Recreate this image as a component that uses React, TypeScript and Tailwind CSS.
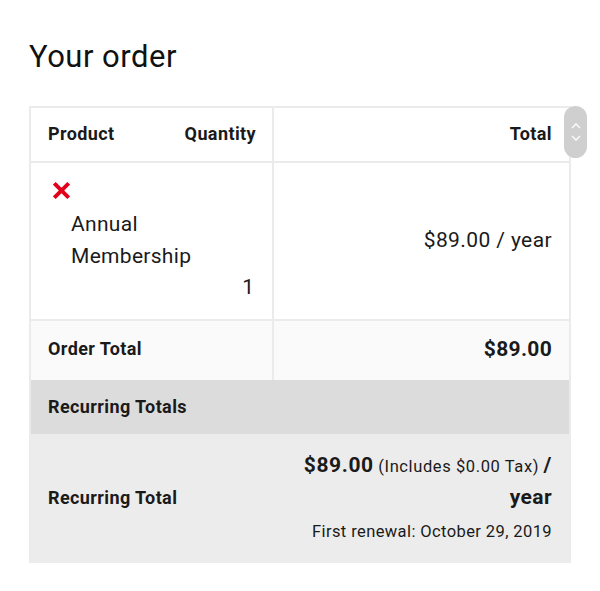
import React from "react";

export default function App() {
  return (
    <div
      className="min-h-[591px] w-[600px] bg-white text-[#1a1a1a]"
      style={{ fontFamily: "Roboto, 'Liberation Sans', sans-serif" }}
    >
      <div className="relative pl-[29px] pr-[29px] pt-[38px]">
        <h1 className="text-[31px] leading-[38px] font-normal tracking-[0.5px] text-[#111]">Your order</h1>

        <div className="mt-[30px] border-2 border-[#ebebeb] border-b-0">
          {/* header */}
          <div className="grid grid-cols-[243px_1fr] h-[55px] border-b-2 border-[#ebebeb]">
            <div className="flex items-center justify-between pl-[17px] pr-[16px] pb-[2px] border-r-2 border-[#ebebeb] text-[18px] tracking-[0.4px] font-bold">
              <span>Product</span>
              <span>Quantity</span>
            </div>
            <div className="flex items-center justify-end pr-[17px] pb-[2px] text-[18px] tracking-[0.4px] font-bold">Total</div>
          </div>

          {/* product */}
          <div className="grid grid-cols-[243px_1fr] h-[158px] border-b-2 border-[#ebebeb]">
            <div className="flex flex-col pl-[21px] pr-[18px] pt-[19px] border-r-2 border-[#ebebeb]">
              <svg width="17" height="17" viewBox="0 0 16 16" className="ml-[1px]">
                <path d="M2.5 2.5 L13.5 13.5 M13.5 2.5 L2.5 13.5" stroke="#e2001a" strokeWidth="3.6" strokeLinecap="square" />
              </svg>
              <div className="pl-[19px] mt-[9px] text-[21px] leading-[32px] tracking-[0.3px] font-normal">
                Annual
                <br />
                Membership
              </div>
              <div className="text-right text-[21px] leading-[32px] -mt-[1px]">1</div>
            </div>
            <div className="flex items-center justify-end pr-[17px] text-[21px] tracking-[0.4px]">$89.00 / year</div>
          </div>

          {/* order total */}
          <div className="grid grid-cols-[243px_1fr] h-[59px] bg-[#fafafa]">
            <div className="flex items-center pl-[17px] pb-[4px] border-r-2 border-[#ebebeb] text-[18px] tracking-[0.4px] font-bold">Order Total</div>
            <div className="flex items-center justify-end pr-[17px] pb-[2px] text-[21px] tracking-[0.3px] font-bold">$89.00</div>
          </div>

          {/* recurring totals heading */}
          <div className="flex items-center h-[54px] pl-[17px] pb-[2px] bg-[#dcdcdc] text-[18px] tracking-[0.4px] font-bold">Recurring Totals</div>

          {/* recurring total */}
          <div className="grid grid-cols-[243px_1fr] h-[129px] bg-[#ececec]">
            <div className="flex items-center pl-[17px] pb-[2px] text-[18px] tracking-[0.4px] font-bold">Recurring Total</div>
            <div className="flex flex-col items-end justify-center pr-[17px] pb-[5px] text-right tracking-[0.4px]">
              <div className="leading-[33px] tracking-[0.6px]">
                <span className="text-[21px] font-bold">$89.00</span>{" "}
                <span className="text-[16.5px]">(Includes $0.00 Tax)</span>{" "}
                <span className="text-[21px] font-bold">/</span>
              </div>
              <div className="text-[21px] font-bold leading-[28px]">year</div>
              <div className="text-[16.5px] leading-[22px] mt-[10px]">First renewal: October 29, 2019</div>
            </div>
          </div>
        </div>

        {/* scroll widget */}
        <div className="absolute left-[564px] top-[106px] flex h-[52px] w-[23px] flex-col items-center justify-center gap-[6px] rounded-full bg-[#cfcfcf]">
          <svg width="10" height="6" viewBox="0 0 10 6">
            <path d="M1 5 L5 1 L9 5" stroke="#fff" strokeWidth="1.3" fill="none" />
          </svg>
          <svg width="10" height="6" viewBox="0 0 10 6">
            <path d="M1 1 L5 5 L9 1" stroke="#fff" strokeWidth="1.3" fill="none" />
          </svg>
        </div>
      </div>
    </div>
  );
}
